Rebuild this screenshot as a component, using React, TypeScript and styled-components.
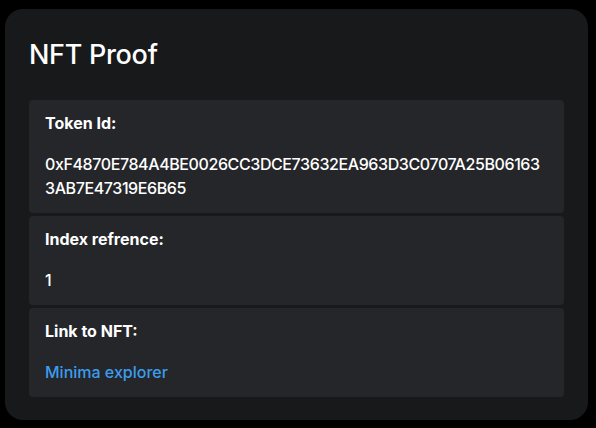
import React from "react";
import styled, { createGlobalStyle } from "styled-components";

const Global = createGlobalStyle`
  html, body { margin: 0; padding: 0; background: #000; }
  body { font-family: Inter, "Noto Sans", sans-serif; color: #f5f5f5; }
  * { box-sizing: border-box; }
`;

const Page = styled.div`
  width: 596px;
  height: 428px;
  padding: 9px 8px 8px 5px;
`;

const Card = styled.div`
  width: 583px;
  height: 411px;
  background: #18191b;
  border-radius: 18px;
  padding: 29px 24px 24px 24px;
  display: flex;
  flex-direction: column;
`;

const Title = styled.h1`
  margin: 0 0 29px 0;
  font-size: 27px;
  line-height: 33px;
  font-weight: 500;
  letter-spacing: -0.3px;
  color: #fff;
`;

const List = styled.div`
  display: flex;
  flex-direction: column;
  gap: 3px;
`;

const Section = styled.div`
  background: #25262a;
  border-radius: 4px;
  padding: 11px 16px 13px 16px;
  display: flex;
  flex-direction: column;
  gap: 17px;
`;

const Label = styled.div`
  font-size: 16px;
  line-height: 24px;
  font-weight: 700;
  color: #fff;
`;

const Value = styled.div`
  font-size: 16px;
  line-height: 24px;
  font-weight: 500;
  letter-spacing: -0.4px;
  color: #fff;
  word-break: break-all;
`;

const Link = styled.a`
  font-size: 16px;
  line-height: 24px;
  font-weight: 500;
  color: #3c9dee;
  text-decoration: none;
`;

export default function App() {
  return (
    <>
      <Global />
      <Page>
        <Card>
          <Title>NFT Proof</Title>
          <List>
            <Section>
              <Label>Token Id:</Label>
              <Value>0xF4870E784A4BE0026CC3DCE73632EA963D3C0707A25B061633AB7E47319E6B65</Value>
            </Section>
            <Section>
              <Label>Index refrence:</Label>
              <Value>1</Value>
            </Section>
            <Section>
              <Label>Link to NFT:</Label>
              <Link href="#">Minima explorer</Link>
            </Section>
          </List>
        </Card>
      </Page>
    </>
  );
}
